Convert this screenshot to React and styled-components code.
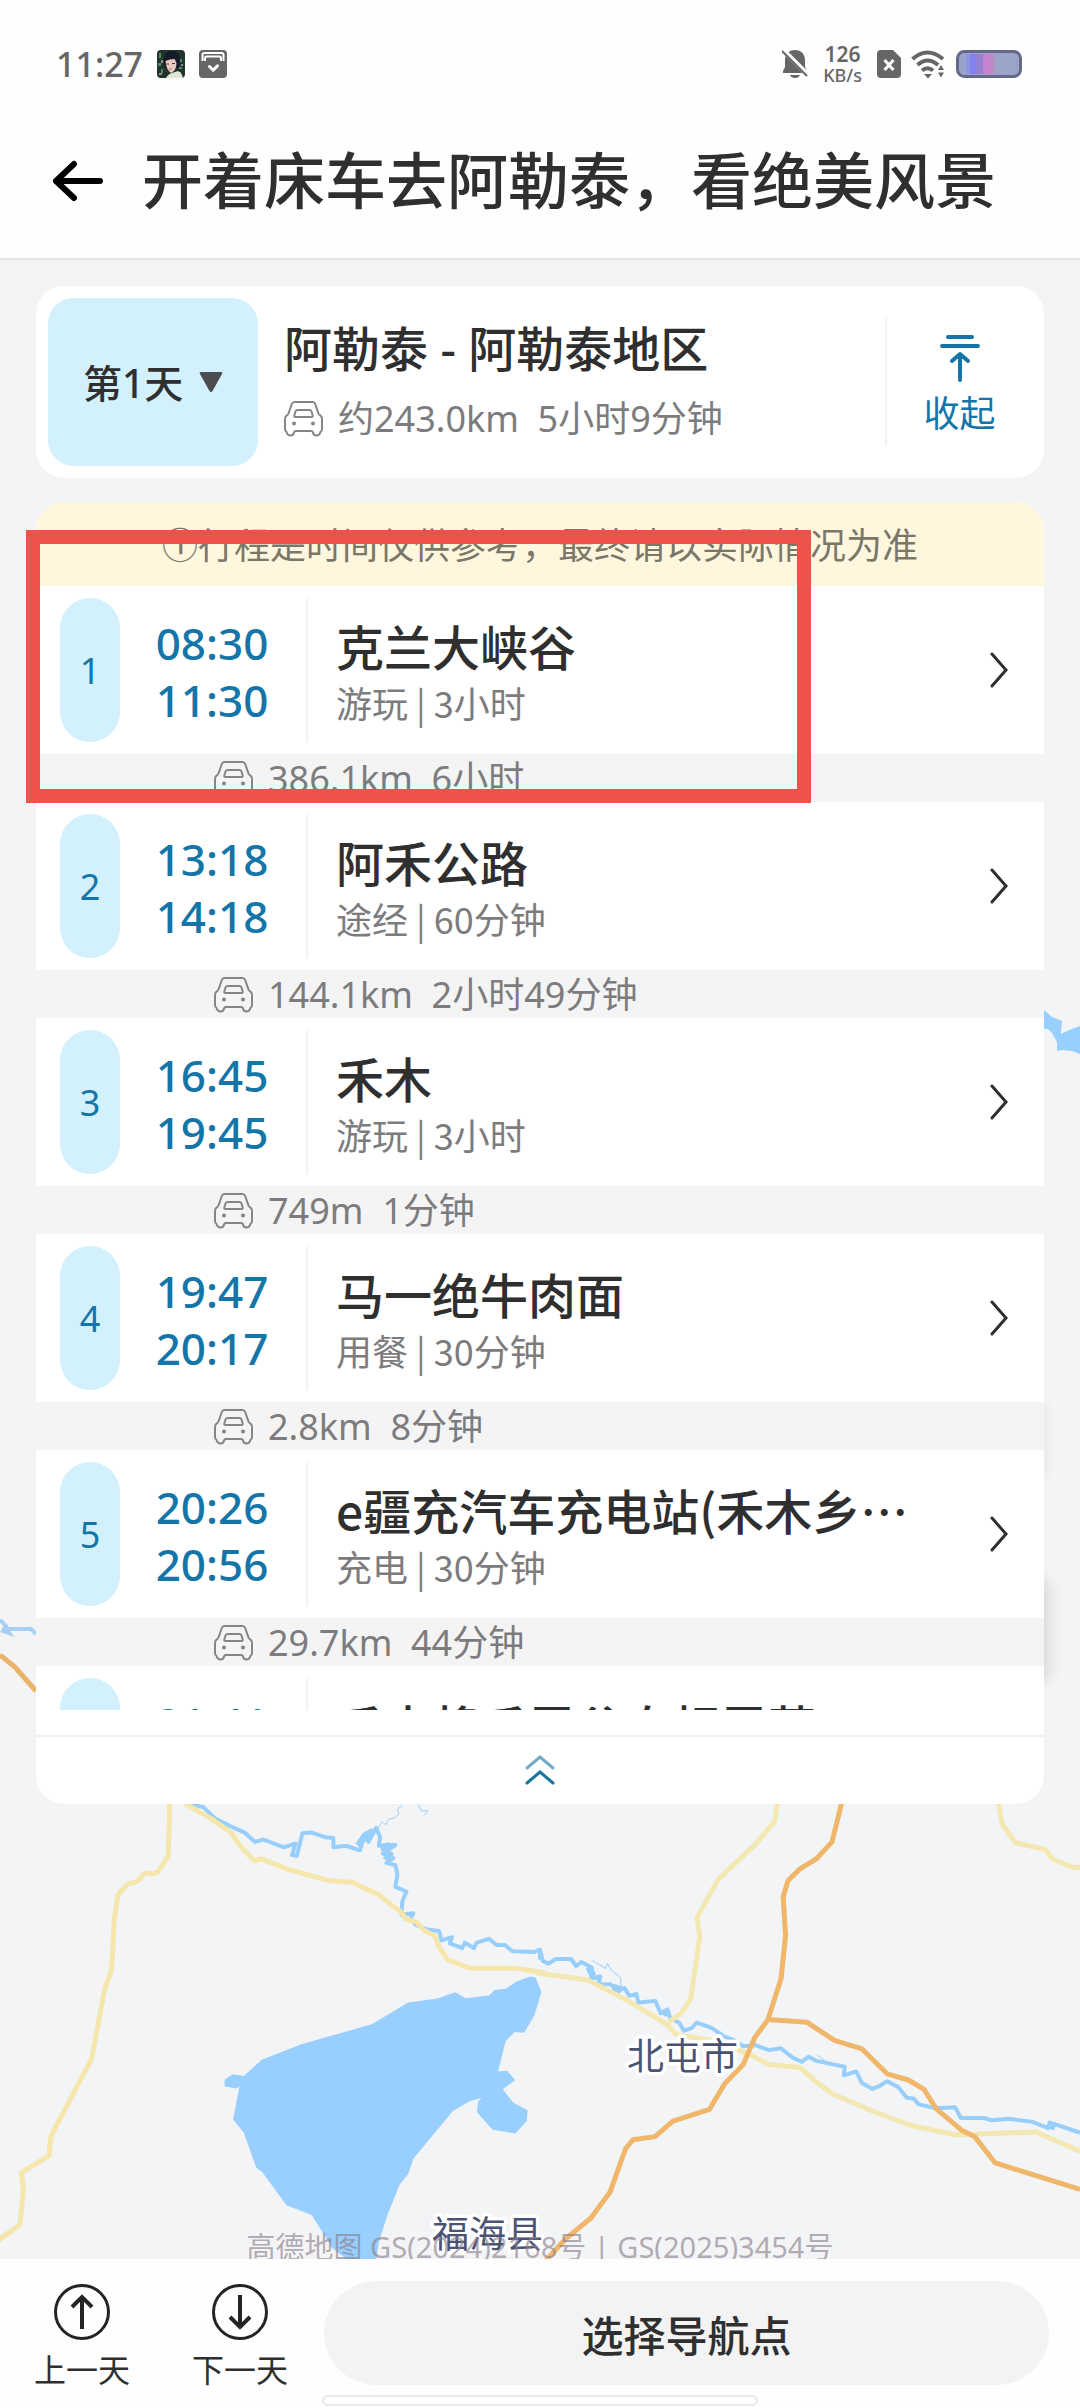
import React, {useState} from 'react';
import styled, {createGlobalStyle} from 'styled-components';

const BLUE = '#1375a8';
const INK = '#2f2f30';
const GREY = '#7c7c7e';
const SKY = '#d3f0fd';

const GlobalStyle = createGlobalStyle`
  * {
    box-sizing: border-box;
  }

  body {
    margin: 0;
    background: #f3f4f6;
    color: ${INK};
    font-family: "Noto Sans", "Noto Sans CJK SC", sans-serif;
  }

  button, select {
    margin: 0;
    padding: 0;
    border: 0;
    background: none;
    color: inherit;
    font: inherit;
    cursor: pointer;
  }

  svg {
    display: block;
    flex: none;
  }
`;

const Page = styled.div`
  display: flex;
  flex-direction: column;
  min-height: 100vh;
`;

const Header = styled.header`
  background: #fefefe;
  border-bottom: 2px solid #e4e5e7;
`;

const StatusBar = styled.div`
  display: flex;
  align-items: center;
  padding: 40px 58px 0 56px;
  height: 88px;
  color: #666;
  font-weight: 500;
`;

const Clock = styled.time`
  font-size: 34px;
  line-height: 48px;
`;

const StatusLeft = styled.div`
  display: flex;
  align-items: center;
  gap: 14px;
  flex: 1;
`;

const StatusRight = styled.div`
  display: flex;
  align-items: center;
  gap: 10px;
`;

const NetSpeed = styled.div`
  display: flex;
  flex-direction: column;
  align-items: center;
  padding: 0 5px;
  font-size: 18px;
  line-height: 20px;

  b {
    font-size: 21px;
    line-height: 22px;
    font-weight: 600;
  }
`;

const TitleBar = styled.div`
  display: flex;
  align-items: center;
  gap: 38px;
  padding: 51px 52px 35px;
`;

const Title = styled.h1`
  margin: 0;
  font-size: 61px;
  line-height: 84px;
  font-weight: 500;
  white-space: nowrap;
`;

const MapArea = styled.main`
  position: relative;
  flex: 1;
  padding: 26px 36px 0;
  overflow: hidden;
`;

const MapCanvas = styled.svg`
  position: absolute;
  inset: 0;
  width: 100%;
  height: 100%;
`;

const Copyright = styled.p`
  position: absolute;
  left: 0;
  right: 0;
  bottom: -8px;
  margin: 0;
  font-size: 29px;
  line-height: 40px;
  text-align: center;
  color: rgba(140, 128, 140, 0.65);
`;

const Summary = styled.section`
  position: relative;
  display: flex;
  align-items: center;
  padding: 12px;
  border-radius: 28px;
  background: #fff;
`;

const DayPicker = styled.label`
  position: relative;
  display: flex;
  align-items: center;
  width: 210px;
  height: 168px;
  border-radius: 26px;
  background: ${SKY};

  select {
    appearance: none;
    width: 100%;
    height: 100%;
    padding-left: 35px;
    border-radius: 26px;
    font-size: 39px;
    font-weight: 500;
  }

  svg {
    position: absolute;
    right: 35px;
    pointer-events: none;
  }
`;

const SummaryText = styled.div`
  flex: 1;
  padding: 4px 0 0 26px;
`;

const SummaryTitle = styled.h2`
  margin: 0;
  font-size: 48px;
  line-height: 70px;
  font-weight: 500;
`;

const Meta = styled.div`
  display: flex;
  align-items: center;
  gap: 15px;
  font-size: 36px;
  line-height: ${p => p.$line || 46}px;
  color: ${GREY};
  white-space: pre;
`;

const FoldButton = styled.button`
  display: flex;
  flex-direction: column;
  align-items: center;
  gap: 8px;
  width: 147px;
  height: 128px;
  padding-top: 16px;
  border-left: 2px solid #f1f2f3;
  color: ${BLUE};
  font-size: 36px;
  line-height: 48px;
`;

const PanelWrap = styled.div`
  position: relative;
  margin-top: 24px;
`;

const Panel = styled.section`
  position: relative;
  border-radius: 28px;
  background: #fff;
  overflow: hidden;
`;

const Notice = styled.p`
  margin: 0;
  padding: 19px 0 15px;
  background: #fef6dd;
  color: #7a7769;
  font-size: 36px;
  line-height: 50px;
  text-align: center;
  white-space: nowrap;
`;

const Stops = styled.ol`
  margin: 0 0 25px;
  padding: 0;
  max-height: 1124px;
  overflow-y: auto;
  list-style: none;
  scrollbar-width: none;
`;

const StopButton = styled.button`
  display: flex;
  align-items: stretch;
  width: 100%;
  padding: 12px 36px 12px 24px;
  text-align: left;
`;

const Pill = styled.span`
  display: flex;
  align-items: center;
  justify-content: center;
  width: 60px;
  height: 144px;
  border-radius: 30px;
  background: ${SKY};
  color: ${BLUE};
  font-size: 36px;
`;

const Times = styled.span`
  display: flex;
  flex-direction: column;
  justify-content: center;
  width: 188px;
  padding: 4px 2px 0 0;
  border-right: 2px solid #f3f4f5;
  color: ${BLUE};
  font-size: 44px;
  line-height: 57px;
  font-weight: 500;
  text-align: center;
`;

const StopBody = styled.span`
  display: flex;
  flex: 1;
  flex-direction: column;
  min-width: 0;
  padding: 17px 0 0 28px;
  font-family: "Noto Sans CJK SC", sans-serif;
`;

const StopName = styled.span`
  font-size: 48px;
  line-height: 60px;
  font-weight: 500;
  white-space: nowrap;
`;

const StopInfo = styled.span`
  color: ${GREY};
  font-size: 36px;
  line-height: 54px;
`;

const ChevronCell = styled.span`
  display: flex;
  align-items: center;
`;

const Leg = styled.div`
  padding: 2px 0 0 178px;
  background: #f4f4f4;
`;

const CollapseButton = styled.button`
  display: flex;
  align-items: center;
  justify-content: center;
  width: 100%;
  height: 69px;
  padding-bottom: 2px;
  border-top: 2px solid #f1f2f4;
`;

const Highlight = styled.div`
  position: absolute;
  top: 28px;
  left: -10px;
  width: 785px;
  height: 273px;
  border: 14px solid #ef524b;
  pointer-events: none;
`;

const Footer = styled.footer`
  background: #fefefe;
`;

const Actions = styled.div`
  display: flex;
  align-items: flex-start;
  gap: 36px;
  padding: 22px 31px 4px 34px;
`;

const DayButton = styled.button`
  display: flex;
  flex-direction: column;
  align-items: center;
  gap: 9px;
  width: 96px;
  padding-top: 3px;
  margin-right: ${p => p.$gap || 0}px;
  font-size: 32px;
  line-height: 42px;
  white-space: nowrap;
`;

const NavButton = styled.button`
  flex: 1;
  height: 104px;
  border-radius: 52px;
  background: #f3f3f3;
  font-size: 42px;
  font-weight: 500;
`;

const HomeBar = styled.div`
  width: 436px;
  height: 11px;
  margin: 0 auto 2px;
  border: 2px solid #e9e9e9;
  border-radius: 6px;
  background: #fff;
`;

const stops = [
    {start: '08:30', end: '11:30', name: '克兰大峡谷', info: '游玩 | 3小时', leg: '386.1km  6小时'},
    {start: '13:18', end: '14:18', name: '阿禾公路', info: '途经 | 60分钟', leg: '144.1km  2小时49分钟'},
    {start: '16:45', end: '19:45', name: '禾木', info: '游玩 | 3小时', leg: '749m  1分钟'},
    {start: '19:47', end: '20:17', name: '马一绝牛肉面', info: '用餐 | 30分钟', leg: '2.8km  8分钟'},
    {start: '20:26', end: '20:56', name: 'e疆充汽车充电站(禾木乡…', info: '充电 | 30分钟', leg: '29.7km  44分钟'},
    {start: '21:41', end: '08:30', name: '禾木将禾雪谷自相露营', info: '住宿'},
];

function CarIcon() {
    return (
        <svg width="39" height="36" viewBox="0 0 39 36" fill="none" stroke="#858587" strokeWidth="2" strokeLinejoin="round">
            <path d="M10.500 1h18q2 0 2.700 2l3.300 9.500q.4 1 1.500 1.700 2 1.300 2 3.800v10q0 2-1.500 2.800-.8 3.700-4 3.700-3 0-3.500-3-.3-1.500-2-1.500H12q-1.700 0-2 1.500-.5 3-3.500 3-3.200 0-4-3.700Q1 30 1 28V18q0-2.500 2-3.800 1.100-.7 1.500-1.700L7.800 3q.7-2 2.700-2Z"/>
            <path d="M13.500 9h12q1.500 0 2 1.500l1.200 4q.4 1.500-1.200 1.500H11.500Q9.900 16 10.300 14.500l1.200-4Q12 9 13.500 9Z"/>
            <circle cx="10" cy="22.500" r="2" fill="#858587" stroke="none"/>
            <circle cx="29" cy="22.500" r="2" fill="#858587" stroke="none"/>
        </svg>
    );
}

function Avatar() {
    return (
        <svg width="28" height="28" viewBox="0 0 28 28">
            <clipPath id="avatar"><rect width="28" height="28" rx="4"/></clipPath>
            <g clipPath="url(#avatar)">
                <path d="M0 0h28v28H0z" fill="#20352c"/>
                <path d="M2 3h2v5H2zM1 13h3v3H1zM4 19h2v4H4zM23 9h2v3h-2zM22 17h3v2h-3z" fill="#4f8a6a"/>
                <path d="M4 10h2v3H4zM2 23h3v2H2zM24 14h2v2h-2zM22 22h2v2h-2z" fill="#9a8f86"/>
                <path d="M7 14Q5 2 14 1q10 0 9 11l-1 6H8Z" fill="#161b2a"/>
                <path d="M8.500 11q4-2 9-2l2 4q0 7-5 10-5-2-6-12Z" fill="#ecc9c0"/>
                <path d="M9 28q2-4 6-5l6-2q4 2 5 7Z" fill="#dfe6d8"/>
                <path d="M9.500 14h2.500M15 13.500h3" stroke="#4a3038"/>
                <path d="M12 19h2.500" stroke="#c4565e"/>
            </g>
        </svg>
    );
}

function LockBoxIcon() {
    return (
        <svg width="28" height="28" viewBox="0 0 28 28">
            <rect width="28" height="28" rx="4" fill="#666"/>
            <path d="M3.500 11V5q0-2 2-2h17q2 0 2 2v6M6 11V8.500q0-2 2-2h12q2 0 2 2V11" fill="none" stroke="#fff" strokeWidth="2"/>
            <path d="m10.500 16.500 3.700 3.700 4.300-4.300" fill="none" stroke="#fff" strokeWidth="3" strokeLinecap="round" strokeLinejoin="round"/>
        </svg>
    );
}

function BellOffIcon() {
    return (
        <svg width="26" height="30" viewBox="0 0 26 30">
            <path d="M13 1c6 0 10 4 10 10v7l2 4v2H1v-2l2-4v-7C3 5 7 1 13 1ZM8 26h10q-1 3-5 3t-5-3Z" fill="#666"/>
            <path d="M-1-1 27 27" stroke="#fefefe" strokeWidth="5"/>
            <path d="m0 2 25 25" stroke="#666" strokeWidth="2"/>
        </svg>
    );
}

function SimIcon() {
    return (
        <svg width="24" height="28" viewBox="0 0 24 28">
            <path d="M4 0h12l8 8v16q0 4-4 4H4q-4 0-4-4V4q0-4 4-4Z" fill="#666"/>
            <path d="m7.500 10 9 10m0-10-9 10" stroke="#fff" strokeWidth="3"/>
        </svg>
    );
}

function WifiIcon() {
    return (
        <svg width="35" height="30" viewBox="0 0 35 30" fill="none" stroke="#666" strokeWidth="4">
            <path d="M1.500 10Q16.500-3 32 10M6.500 16Q16.500 7 27 16M11 21.500q5.500-4.500 11 0"/>
            <path d="M13 25h8l-4 4.500ZM27 21l3-5 3 5ZM27 23.500h6l-3 5Z" fill="#666" stroke="none"/>
        </svg>
    );
}

function BatteryIcon() {
    return (
        <svg width="66" height="28" viewBox="0 0 66 28">
            <rect x="1.500" y="1.500" width="63" height="25" rx="7" fill="#9aa4c8" stroke="#64698a" strokeWidth="3"/>
            <path d="M10 4h6v20h-6z" fill="#8b95e0"/>
            <path d="M14 4h6v20h-6z" fill="#8480f2"/>
            <path d="M20 4h7v20h-7z" fill="#9582d4"/>
            <path d="M27 4h8v20h-8z" fill="#c681cf"/>
            <path d="M35 4h4v20h-4z" fill="#b48fc4"/>
        </svg>
    );
}

function DayIcon({down}) {
    return (
        <svg width="56" height="56" viewBox="0 0 56 56" fill="none" stroke="#242426" strokeWidth="3">
            <circle cx="28" cy="28" r="26.500"/>
            {down
                ? <path d="M28 11v31M18 33l10 10 10-10" strokeWidth="4"/>
                : <path d="M28 45V14M18 23l10-10 10 10" strokeWidth="4"/>}
        </svg>
    );
}

// Both tiles are digitised at 1568 units per 540px of width.
const LEFT_TILE = 'translate(0 1800) scale(.3444 .3878)';
const RIGHT_TILE = 'translate(540 1800) scale(.3444 .3878)';

function RoadMap() {
    return (
        <MapCanvas viewBox="0 260 1080 1999" preserveAspectRatio="xMidYMin slice" aria-hidden="true">
            <defs>
                <filter id="soft" x="-50%" y="-50%" width="200%" height="200%">
                    <feGaussianBlur stdDeviation="7"/>
                </filter>
            </defs>
            <style>{'.road path{fill:none;stroke-linejoin:round;vector-effect:non-scaling-stroke}'}</style>
            <path fill="#98cfff" d="M1044 1010l8 7 10 4-1 13 8-4 11-4v28l-8-3-10-1-5 1v-9l-5-9-4-4h-4Z"/>
            <path fill="none" stroke="#a8cff2" strokeWidth="4" d="M0 1620l6 6-3 5 6 2-3-4 6 0h19l5 5"/>
            <path fill="none" stroke="#e9b46a" strokeWidth="5" d="M0 1655l15 12 21 24"/>
            <rect x="1000" y="1576" width="50" height="108" rx="14" opacity=".1" filter="url(#soft)"/>
            <rect x="1000" y="1400" width="46" height="80" rx="14" opacity=".06" filter="url(#soft)"/>

            <g className="road" transform={LEFT_TILE}>
                <g fill="#98cffe">
                    <polygon points="708,712 760,670 875,630 1080,578 1185,522 1270,512 1322,496 1352,511 1420,504 1436,490 1468,487 1500,468 1540,455 1555,458 1572,495 1552,555 1522,600 1495,598 1468,622 1446,700 1472,698 1496,722 1460,746 1490,780 1532,800 1530,828 1496,860 1430,850 1385,805 1388,778 1398,768 1365,776 1315,802 1200,925 1185,965 1160,992 1125,1070 1100,1140 1092,1190 1015,1190 965,1155 905,1070 832,1045 762,960 744,948 708,858 677,824 695,738 685,744 652,738 652,722 675,707"/>
                </g>
                <g stroke="#98cffa" strokeWidth="4">
                    <path d="M550 10L590 18 625 48 680 72 710 84 740 108 765 102 825 122 858 112 848 142 862 144 878 86 905 84 945 96 968 98 968 122 1005 118 1045 130 1058 92 1070 108 1092 72 1104 96 1100 118 1148 116 1112 138 1142 150 1122 162 1148 168 1154 192 1148 224 1180 236 1168 262 1166 296 1200 292 1192 306 1208 322 1240 334 1275 338 1282 362 1312 354 1306 370 1342 382 1350 368 1376 382 1384 368 1420 358 1442 374 1466 374 1488 390 1550 392 1568 386 1568 412"/>
                    <path strokeWidth="1" d="M1098 72l12-16 10 8 8-14 18-4 12-10-4-12 14-10M1215 12l8 16 20 0-12 12"/>
                    <path strokeWidth="7" d="M1040 118l20-26 24-12M1105 125l30-8M1120 155l16-22"/>
                </g>
                <g stroke="#f5e6ac" strokeWidth="5">
                    <path d="M492 0v50l-4 96-30 40-14 5-22-3-24 22-28 7-28 28-10 62-8 132-20 48-38 180-118 200-6 50-80 44 6 44-10 90-62 40"/>
                    <path d="M538 10l75 38 58 36 24 32 42 40 22-4 75 26 120 30 68 4 78 32 32 24 32 20 16 20 28 6 26 24 28 12 14 30 24 32 66 22 130 0 90 12"/>
                </g>
            </g>

            <g className="road" transform={RIGHT_TILE}>
                <g stroke="#98cffa" strokeWidth="4">
                    <path d="M0 385L8 415 25 422 45 410 90 410 105 428 120 418 150 432 150 460 175 455 170 475 205 475 225 492 245 485 260 505 280 500 285 522 310 520 335 518 350 550 370 540 378 562 405 575 418 595 440 588 455 574 500 588 535 610 560 618 590 635 625 632 665 645 700 640 720 655 735 665 760 675 780 662 800 672 885 688 882 710 918 700 935 730 965 745 985 738 1008 725 1040 740 1065 768 1085 770 1100 785 1150 795 1205 792 1222 820 1290 820 1312 826 1360 822 1430 830 1475 846 1480 832 1495 836 1568 858"/>
                    <path strokeWidth="7" d="M142 430l12 24M212 482l24 8M360 545l12 8M1476 838l20 6"/>
                    <path strokeWidth="1" d="M152 414l38 20 6-12 10 16 28 20 2 28 12-4M805 658l22 14"/>
                </g>
                <g stroke="#f3e8b2" strokeWidth="5">
                    <path d="M-10 446L138 464 250 515 370 580 395 605 490 618 600 652 665 682 755 690 800 725 850 758 965 802 1080 840 1210 864 1310 860 1440 856 1568 906"/>
                    <path d="M690 0l-8 54-54 58-110 92-62 98 8 50-26 160-28 38-36 22"/>
                    <path d="M1330 0l12 62 38 48 88 18 20 24 60 22h30"/>
                </g>
                <g stroke="#f0b66a" strokeWidth="5">
                    <path d="M878 0l-30 108-46 44-48 26-34 30-14 42 7 100-13 110-38 106-38 46-34 70-54 50-44 66-106 30-52 40-64 8-22 24-44 110-56 68-74 54-62 60"/>
                    <path d="M662 566L775 573 855 620 935 642 1008 706 1070 722 1115 746 1150 796 1225 852 1262 868 1322 936 1568 1004"/>
                </g>
            </g>

            <g fill="#4b5375" stroke="#fff" strokeWidth="7" strokeLinejoin="round" paintOrder="stroke" fontSize="37" fontFamily="Noto Sans CJK SC, sans-serif">
                <text x="627" y="2070">北屯市</text>
                <text x="432" y="2248">福海县</text>
            </g>
        </MapCanvas>
    );
}

function Stop({stop, index}) {
    return (
        <li>
            <StopButton type="button">
                <Pill>{index}</Pill>
                <Times>
                    <span>{stop.start}</span>
                    <span>{stop.end}</span>
                </Times>
                <StopBody>
                    <StopName>{stop.name}</StopName>
                    <StopInfo>{stop.info}</StopInfo>
                </StopBody>
                <ChevronCell>
                    <svg width="18" height="36" viewBox="0 0 18 36" fill="none" stroke={INK} strokeWidth="3" strokeLinecap="round">
                        <path d="m2 2 14 16L2 34"/>
                    </svg>
                </ChevronCell>
            </StopButton>
            {stop.leg && (
                <Leg>
                    <Meta><CarIcon/>{stop.leg}</Meta>
                </Leg>
            )}
        </li>
    );
}

function App() {
    const [day, setDay] = useState('1');

    return (
        <Page>
            <GlobalStyle/>
            <Header>
                <StatusBar>
                    <StatusLeft>
                        <Clock>11:27</Clock>
                        <Avatar/>
                        <LockBoxIcon/>
                    </StatusLeft>
                    <StatusRight>
                        <BellOffIcon/>
                        <NetSpeed><b>126</b>KB/s</NetSpeed>
                        <SimIcon/>
                        <WifiIcon/>
                        <BatteryIcon/>
                    </StatusRight>
                </StatusBar>
                <TitleBar>
                    <button type="button" aria-label="返回">
                        <svg width="52" height="42" viewBox="0 0 52 42" fill="none" stroke="#000" strokeWidth="6" strokeLinecap="round" strokeLinejoin="round">
                            <path d="M22 4 4 21l18 17M4 21h44"/>
                        </svg>
                    </button>
                    <Title>开着床车去阿勒泰，看绝美风景</Title>
                </TitleBar>
            </Header>

            <MapArea>
                <RoadMap/>
                <Copyright>高德地图 GS(2024)2168号 | GS(2025)3454号</Copyright>

                <Summary>
                    <DayPicker>
                        <select aria-label="选择天数" value={day} onChange={e => setDay(e.target.value)}>
                            <option value="1">第1天</option>
                            <option value="2">第2天</option>
                        </select>
                        <svg width="24" height="22" viewBox="0 0 24 22">
                            <path d="M2 1h20q2 0 1 2L13.500 20q-1.500 2-3 0L1 3Q0 1 2 1Z" fill="#4b4b50"/>
                        </svg>
                    </DayPicker>
                    <SummaryText>
                        <SummaryTitle>阿勒泰 - 阿勒泰地区</SummaryTitle>
                        <Meta $line={70}><CarIcon/>约243.0km  5小时9分钟</Meta>
                    </SummaryText>
                    <FoldButton type="button">
                        <svg width="42" height="48" viewBox="0 0 42 48" fill="none" stroke={BLUE} strokeWidth="4" strokeLinecap="round" strokeLinejoin="round">
                            <path d="M9 3h24M3 12h36M21 46V21M13 27l8-7 8 7"/>
                        </svg>
                        收起
                    </FoldButton>
                </Summary>

                <PanelWrap>
                    <Panel>
                        <Notice>①行程是时间仅供参考，最终请以实际情况为准</Notice>
                        <Stops>
                            {stops.map((stop, i) => <Stop key={stop.start} stop={stop} index={i + 1}/>)}
                        </Stops>
                        <CollapseButton type="button" aria-label="收起列表">
                            <svg width="30" height="30" viewBox="0 0 30 30" fill="none" strokeWidth="3" strokeLinecap="round">
                                <path d="M2 13 15 2l13 11" stroke="#72abc6"/>
                                <path d="M2 28l13-11 13 11" stroke="#19749c"/>
                            </svg>
                        </CollapseButton>
                    </Panel>
                    <Highlight/>
                </PanelWrap>
            </MapArea>

            <Footer>
                <Actions>
                    <DayButton type="button" $gap={26}><DayIcon/>上一天</DayButton>
                    <DayButton type="button"><DayIcon down/>下一天</DayButton>
                    <NavButton type="button">选择导航点</NavButton>
                </Actions>
                <HomeBar/>
            </Footer>
        </Page>
    );
}

export default App;
